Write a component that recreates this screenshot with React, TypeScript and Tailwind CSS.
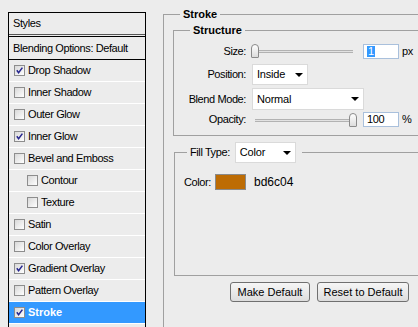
import type { ReactNode } from 'react'

const effects = [
  { name: 'Drop Shadow', on: true },
  { name: 'Inner Shadow', on: false },
  { name: 'Outer Glow', on: false },
  { name: 'Inner Glow', on: true },
  { name: 'Bevel and Emboss', on: false },
  { name: 'Contour', on: false, sub: true },
  { name: 'Texture', on: false, sub: true },
  { name: 'Satin', on: false },
  { name: 'Color Overlay', on: false },
  { name: 'Gradient Overlay', on: true },
  { name: 'Pattern Overlay', on: false },
  { name: 'Stroke', on: true, active: true },
]

function Checkbox({ checked }: { checked: boolean }) {
  return (
    <span className="flex h-[11px] w-[11px] shrink-0 items-center justify-center border border-[#8d8d8d] bg-linear-to-br from-[#d8d8d8] to-white">
      {checked && (
        <svg width="9" height="9" viewBox="0 0 9 9">
          <path d="M1.8 4.2 3.6 6.8 7.4 1.6" fill="none" stroke="#26268e" strokeWidth="1.5" />
        </svg>
      )}
    </span>
  )
}

function Arrow() {
  return (
    <svg width="8" height="4" viewBox="0 0 8 4">
      <path d="M0 0h8L4 4z" fill="#000" />
    </svg>
  )
}

function Dropdown({ value, className }: { value: string; className: string }) {
  return (
    <div className={`flex items-center justify-between border border-[#dadada] bg-white pl-[4px] pr-[4px] ${className}`}>
      <span className="text-[11px] tracking-[-0.2px]">{value}</span>
      <Arrow />
    </div>
  )
}

function Slider({ atEnd }: { atEnd?: boolean }) {
  return (
    <div className="relative ml-[5px] h-[14px] w-[106px] shrink-0">
      <div
        className={`absolute top-[6px] h-[3px] border-y border-[#b2b2b2] bg-[#e2e2e2] ${atEnd ? 'left-[4px] right-[4px]' : 'left-0 right-[4px]'}`}
      />
      <div
        className={`absolute top-0 h-[14px] w-[8px] rounded-t-[4px] rounded-b-[1px] border border-[#8a8a8a] bg-linear-to-b from-white to-[#dcdcdc] ${atEnd ? 'right-0' : 'left-0'}`}
      />
    </div>
  )
}

function Field({ children }: { children: ReactNode }) {
  return (
    <div className="ml-[6px] flex h-[15px] w-[36px] shrink-0 items-center border border-[#a9c0dc] bg-white pl-[3px] text-[11px]">
      {children}
    </div>
  )
}

function Label({ children }: { children: ReactNode }) {
  return <span className="w-[72px] shrink-0 text-right">{children}</span>
}

export default function App() {
  return (
    <div className="flex h-[327px] w-[418px] overflow-hidden bg-[#ececec] font-['Liberation_Sans',Arial,sans-serif] text-[11px] tracking-[-0.4px] text-black">
      {/* effect list */}
      <div className="ml-[8px] mt-[12px] h-[330px] w-[138px] shrink-0 border-x border-t border-black">
        <div className="flex h-[22px] items-center border-b border-[#555] pl-[4px]">Styles</div>
        <div className="mt-[1px] flex h-[24px] items-center border-y border-black pl-[4px]">Blending Options: Default</div>
        {effects.map(fx => (
          <div
            key={fx.name}
            className={`flex h-[22px] items-center gap-[3px] border-b border-white ${fx.sub ? 'pl-[18px]' : 'pl-[5px]'} ${fx.active ? 'bg-[#3399ff] font-bold tracking-normal text-white' : ''}`}
          >
            <Checkbox checked={fx.on} />
            <span>{fx.name}</span>
          </div>
        ))}
      </div>

      {/* stroke settings */}
      <fieldset className="ml-[17px] mt-[8px] h-[330px] w-[270px] shrink-0 border border-[#a0a0a0]">
        <legend className="ml-[16px] px-[3px] text-[11px] font-bold leading-[13px] tracking-normal">Stroke</legend>

        <fieldset className="ml-[9px] mt-[3px] flex h-[112px] w-[260px] flex-col border border-[#a0a0a0]">
          <legend className="ml-[16px] px-[3px] font-bold leading-[13px] tracking-normal">Structure</legend>
          <div className="mt-[7px] flex h-[14px] items-center">
            <Label>Size:</Label>
            <Slider />
            <Field>
              <span className="bg-[#3399ff] px-[1px] leading-[11px] text-white">1</span>
            </Field>
            <span className="ml-[3px]">px</span>
          </div>
          <div className="mt-[6px] flex items-center">
            <Label>Position:</Label>
            <Dropdown value="Inside" className="ml-[6px] h-[21px] w-[56px]" />
          </div>
          <div className="mt-[3px] flex items-center">
            <Label>Blend Mode:</Label>
            <Dropdown value="Normal" className="ml-[6px] h-[22px] w-[112px]" />
          </div>
          <div className="mt-[2px] flex h-[15px] items-center">
            <Label>Opacity:</Label>
            <Slider atEnd />
            <Field>100</Field>
            <span className="ml-[3px]">%</span>
          </div>
        </fieldset>

        <fieldset className="ml-[10px] mt-[6px] h-[134px] w-[260px] border border-[#a0a0a0]">
          <legend className="ml-[12px] flex items-center gap-[5px] pl-[3px] pr-[6px]">
            <span>Fill Type:</span>
            <Dropdown value="Color" className="h-[21px] w-[61px]" />
          </legend>
          <div className="mt-[10px] flex items-center pl-[9px]">
            <span>Color:</span>
            <span className="ml-[4px] h-[16px] w-[31px] border border-[#8a8a8a] bg-[#bd6c04]" />
            <span className="ml-[8px] text-[12px] tracking-normal">bd6c04</span>
          </div>
        </fieldset>

        <div className="ml-[66px] mt-[6px] flex gap-[7px] tracking-normal">
          <button className="h-[20px] w-[80px] rounded-[3px] border border-[#707070] bg-linear-to-b from-[#f6f6f6] to-[#dddddd] text-[11px]">
            Make Default
          </button>
          <button className="h-[20px] w-[92px] rounded-[3px] border border-[#707070] bg-linear-to-b from-[#f6f6f6] to-[#dddddd] text-[11px]">
            Reset to Default
          </button>
        </div>
      </fieldset>
    </div>
  )
}
